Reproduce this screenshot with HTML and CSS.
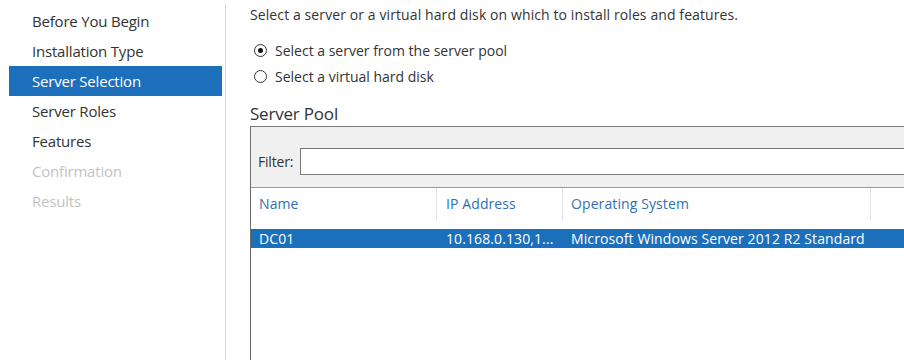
FILE: index.html
```html
<!DOCTYPE html>
<html lang="en">
<head>
  <meta charset="UTF-8" />
  <title>Add Roles and Features Wizard - Server Selection</title>
  <link rel="stylesheet" href="styles.css">
</head>
<body>
  <div class="wizard">
    <ul class="steps">
      <li>Before You Begin</li>
      <li>Installation Type</li>
      <li class="active">Server Selection</li>
      <li>Server Roles</li>
      <li>Features</li>
      <li class="disabled">Confirmation</li>
      <li class="disabled">Results</li>
    </ul>

    <div class="content">
      <p class="intro">Select a server or a virtual hard disk on which to install roles and features.</p>

      <label class="radio first"><span class="dot checked"></span>Select a server from the server pool</label>
      <label class="radio"><span class="dot"></span>Select a virtual hard disk</label>

      <h2>Server Pool</h2>

      <div class="pool">
        <div class="filter">
          <span>Filter:</span>
          <div class="filter-input"></div>
        </div>

        <div class="grid-head">
          <div class="col col-name">Name</div>
          <div class="col col-ip">IP Address</div>
          <div class="col col-os">Operating System</div>
          <div class="col col-rest"></div>
        </div>

        <div class="grid-row selected">
          <div class="col col-name">DC01</div>
          <div class="col col-ip">10.168.0.130,1...</div>
          <div class="col col-os">Microsoft Windows Server 2012 R2 Standard</div>
          <div class="col col-rest"></div>
        </div>
      </div>
    </div>
  </div>
</body>
</html>
```

FILE: styles.css
```css
body {
  margin: 0;
  background: #fff;
  font-family: 'Open Sans', 'Noto Sans', sans-serif;
  color: #333;
  overflow: hidden;
}

.wizard {
  display: flex;
  height: 360px;
}

/* left step list */
.steps {
  list-style: none;
  margin: 4px 0 0 0;
  padding: 2px 0 0 9px;
  width: 216px;
  border-right: 1px solid #d6d6d6;
}

.steps li {
  height: 30px;
  line-height: 30px;
  padding-left: 23px;
  font-size: 15px;
  letter-spacing: -0.2px;
  margin-right: 3px;
}

.steps li.active {
  background: #1c6fba;
  color: #fff;
}

.steps li.disabled {
  color: #c3c3c3;
}

/* right content */
.content {
  flex: 1;
  display: flex;
  flex-direction: column;
  padding: 5px 0 0 24px;
  min-width: 0;
}

.intro {
  margin: 0;
  font-size: 14px;
  line-height: 20px;
  letter-spacing: 0.1px;
}

.radio {
  display: flex;
  align-items: center;
  height: 26px;
  font-size: 14px;
  padding-left: 4px;
}

.radio.first {
  margin-top: 12px;
}

.dot {
  width: 11px;
  height: 11px;
  border: 1px solid #333;
  border-radius: 50%;
  margin-right: 8px;
  position: relative;
}

.dot.checked::after {
  content: '';
  position: absolute;
  left: 3px;
  top: 3px;
  width: 5px;
  height: 5px;
  border-radius: 50%;
  background: #111;
}

h2 {
  margin: 14px 0 0 0;
  font-size: 17px;
  font-weight: normal;
  line-height: 22px;
  letter-spacing: -0.2px;
}

.pool {
  flex: 1;
  margin-top: 1px;
  margin-right: -20px;
  border-top: 1px solid #7a7a7a;
  border-left: 1px solid #6a6a6a;
}

.filter {
  display: flex;
  align-items: center;
  background: #f0f0f0;
  height: 60px;
  padding: 0 0 0 7px;
  border-bottom: 1px solid #9a9a9a;
  font-size: 14px;
  letter-spacing: -0.2px;
}

.filter span {
  margin-right: 7px;
  padding-top: 8px;
}

.filter-input {
  flex: 1;
  height: 25px;
  margin-top: 8px;
  background: #fff;
  border: 1px solid #7a7a7a;
}

.grid-head,
.grid-row {
  display: flex;
  font-size: 14px;
  letter-spacing: 0.1px;
}

.grid-head {
  height: 41px;
  color: #2f70b4;
}

.grid-head .col {
  line-height: 32px;
  height: 32px;
  border-right: 1px solid #e4e4e4;
}

.grid-row.selected {
  height: 19px;
  line-height: 19px;
  background: #1c6fba;
  color: #fff;
}

.col {
  white-space: nowrap;
  overflow: hidden;
}

.col-name {
  width: 177px;
  padding-left: 8px;
}

.col-ip {
  width: 116px;
  padding-left: 9px;
}

.col-os {
  width: 299px;
  padding-left: 8px;
}

.col-rest {
  flex: 1;
}

.grid-row .col {
  border-right: 1px solid transparent;
}
```
